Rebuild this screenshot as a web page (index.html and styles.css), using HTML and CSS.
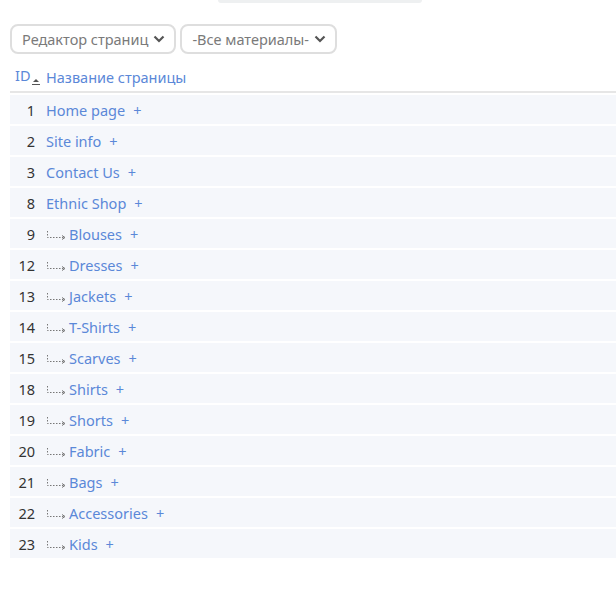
FILE: index.html
```html
<!DOCTYPE html>
<html lang="ru">
<head>
    <meta charset="UTF-8">
    <title>Страницы</title>
    <link rel="stylesheet" href="styles.css">
</head>
<body>
    <div class="top-tab"></div>

    <div class="filters">
        <div class="select">Редактор страниц <span class="chev"><svg width="12" height="8" viewBox="0 0 12 8"><path d="M1.5 1.5 6 6l4.5-4.5" fill="none" stroke="#555" stroke-width="2.2"/></svg></span></div>
        <div class="select">-Все материалы- <span class="chev"><svg width="12" height="8" viewBox="0 0 12 8"><path d="M1.5 1.5 6 6l4.5-4.5" fill="none" stroke="#555" stroke-width="2.2"/></svg></span></div>
    </div>

    <table class="pages">
        <thead>
            <tr>
                <th class="col-id">ID<span class="sort"><svg width="8" height="7" viewBox="0 0 8 7"><path d="M1 4 4 1l3 3z" fill="#555"/><path d="M0 6.5h8" stroke="#555" stroke-width="1"/></svg></span></th>
                <th>Название страницы</th>
            </tr>
        </thead>
        <tbody id="rows"></tbody>
    </table>

    <script>
        const pages = [
            [1, 'Home page', 0], [2, 'Site info', 0], [3, 'Contact Us', 0], [8, 'Ethnic Shop', 0],
            [9, 'Blouses', 1], [12, 'Dresses', 1], [13, 'Jackets', 1], [14, 'T-Shirts', 1],
            [15, 'Scarves', 1], [18, 'Shirts', 1], [19, 'Shorts', 1], [20, 'Fabric', 1],
            [21, 'Bags', 1], [22, 'Accessories', 1], [23, 'Kids', 1]
        ];
        const arrow = '<svg class="child" width="21" height="9" viewBox="0 0 21 9"><path d="M1.5 0v6.5H18" fill="none" stroke="#777" stroke-width="1" stroke-dasharray="1.5 1.5"/><path d="M16 4.5l3 2-3 2" fill="none" stroke="#777" stroke-width="1"/></svg>';
        const body = document.getElementById('rows');
        pages.forEach(([id, name, child]) => {
            const tr = document.createElement('tr');
            tr.innerHTML = `<td class="col-id">${id}</td>
                <td>${child ? arrow : ''}<a href="#">${name}</a><span class="add">+</span></td>`;
            body.appendChild(tr);
        });
    </script>
</body>
</html>
```

FILE: styles.css
```css
* {
    box-sizing: border-box;
    margin: 0;
    padding: 0;
}
body {
    background-color: #fff;
    font-family: 'Noto Sans', sans-serif;
    font-size: 14.5px;
    color: #333;
    padding: 0 0 0 10px;
}
.top-tab {
    margin-left: 208px;
    width: 204px;
    height: 3px;
    background-color: #eef0f1;
    border-radius: 0 0 8px 8px;
}
.filters {
    display: flex;
    gap: 4px;
    margin-top: 21px;
}
.select {
    height: 30px;
    border: 2px solid #dedede;
    border-radius: 8px;
    padding: 0 9px 0 10px;
    display: flex;
    align-items: center;
    gap: 5px;
    color: #7a7a7a;
}
.chev {
    display: flex;
}
.pages {
    width: 100%;
    border-collapse: separate;
    border-spacing: 0;
}
.pages th {
    text-align: left;
    font-weight: normal;
    color: #5b88d8;
    line-height: 20px;
    padding: 11px 0 2px 4px;
    border-bottom: 2px solid #e6e6e6;
    vertical-align: middle;
}
.pages th.col-id {
    padding-left: 5px;
    padding-right: 0;
}
.sort {
    display: inline-block;
    margin-left: 1px;
    vertical-align: -4px;
}
.pages tbody tr td {
    background-color: #f5f7fb;
    height: 31px;
    border-top: 2px solid #fff;
    vertical-align: middle;
    padding: 0 0 0 4px;
}
.pages td.col-id {
    width: 32px;
    text-align: right;
    padding: 0 7px 0 0;
}
.child {
    vertical-align: 0;
    margin-right: 2px;
}
.pages a {
    color: #5b88d8;
    text-decoration: none;
}
.add {
    color: #5b88d8;
    margin-left: 8px;
}
```
